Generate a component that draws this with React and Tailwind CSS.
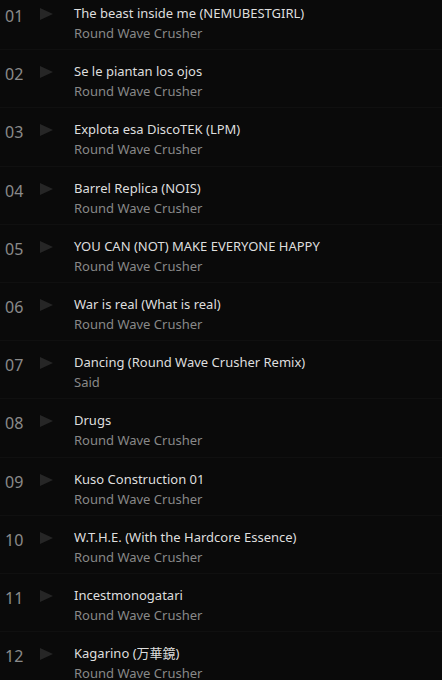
import React from "react";

const tracks = [
  ["01", "The beast inside me (NEMUBESTGIRL)", "Round Wave Crusher"],
  ["02", "Se le piantan los ojos", "Round Wave Crusher"],
  ["03", "Explota esa DiscoTEK (LPM)", "Round Wave Crusher"],
  ["04", "Barrel Replica (NOIS)", "Round Wave Crusher"],
  ["05", "YOU CAN (NOT) MAKE EVERYONE HAPPY", "Round Wave Crusher"],
  ["06", "War is real (What is real)", "Round Wave Crusher"],
  ["07", "Dancing (Round Wave Crusher Remix)", "Said"],
  ["08", "Drugs", "Round Wave Crusher"],
  ["09", "Kuso Construction 01", "Round Wave Crusher"],
  ["10", "W.T.H.E. (With the Hardcore Essence)", "Round Wave Crusher"],
  ["11", "Incestmonogatari", "Round Wave Crusher"],
  ["12", "Kagarino (万華鏡)", "Round Wave Crusher"],
];

export default function App() {
  return (
    <div
      className="w-[442px] h-[680px] overflow-hidden bg-[#0a0a0a]"
      style={{ fontFamily: '"Noto Sans", "Noto Sans CJK JP", sans-serif' }}
    >
      <div className="-mt-[8px]">
        {tracks.map(([n, t, a]) => (
          <div key={n} className="h-[58.2px] flex border-b border-[#101010]">
            <div className="w-[40px] pl-[5px] pt-[13px] text-[16px] leading-[22px] text-[#8a8a8a]">
              {n}
            </div>
            <div className="w-[34px] pt-[16px]">
              <svg width="13" height="12" viewBox="0 0 13 12">
                <polygon points="0,0 13,6 0,12" fill="#262626" />
              </svg>
            </div>
            <div className="flex flex-col pt-[11px]">
              <div className="text-[13px] leading-[20px] text-[#dedede]">{t}</div>
              <div className="text-[13px] leading-[20px] text-[#888888]">{a}</div>
            </div>
          </div>
        ))}
      </div>
    </div>
  );
}
